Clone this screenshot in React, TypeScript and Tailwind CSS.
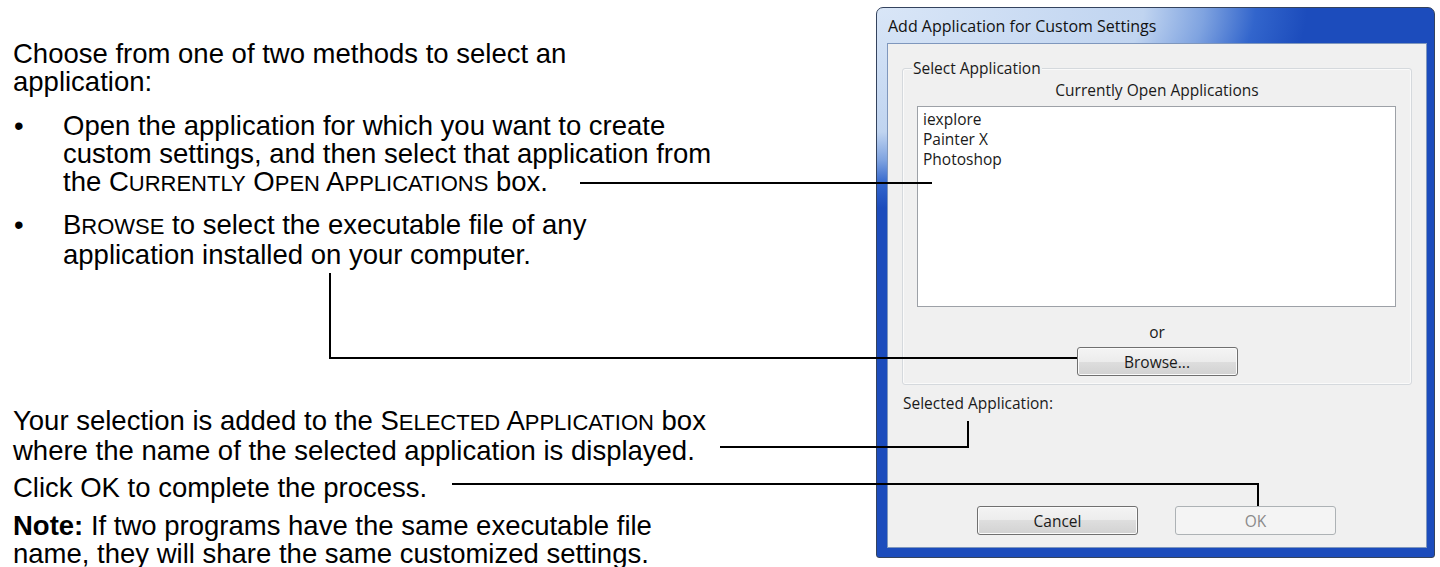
import { Fragment } from 'react'
import type { ReactNode } from 'react'

// Manual-style small caps: full-size initial, the rest at 80%
function Caps({ text }: { text: string }) {
  const words = text.split(' ')
  return (
    <>
      {words.map((w, i) => (
        <Fragment key={i}>
          {i > 0 && ' '}
          {w[0].toUpperCase()}
          <span className="text-[0.8em]">{w.slice(1).toUpperCase()}</span>
        </Fragment>
      ))}
    </>
  )
}

function WinButton({ children, disabled }: { children: ReactNode; disabled?: boolean }) {
  if (disabled) {
    return (
      <button
        disabled
        className="h-[29px] w-[161px] rounded-[3px] border border-[#adb2b5] bg-[#f4f4f4] text-[15.5px] text-[#8a8a8a]"
      >
        {children}
      </button>
    )
  }
  return (
    <button className="h-[29px] w-[161px] rounded-[3px] border border-[#707070] bg-[linear-gradient(to_bottom,#f4f4f4_0%,#ececec_50%,#dedede_50%,#d2d2d2_100%)] text-[15.5px] text-[#1a1a1a] shadow-[inset_0_0_0_1px_#fbfbfb]">
      {children}
    </button>
  )
}

function AddAppDialog() {
  return (
    <div className="ml-auto mr-[5px] mt-[7px] flex h-[551px] w-[559px] shrink-0 flex-col rounded-t-[7px] rounded-b-[3px] border border-[#34435e] bg-[radial-gradient(430px_200px_at_0_0,#d9e6f7_0%,#c0d4f0_62%,#7fa3e0_76%,#3265cc_88%,#1c4cbc_100%)] pb-[9px] pl-[10px] pr-[7px] font-['Open_Sans',sans-serif]">
      {/* title bar */}
      <div className="flex h-[35px] items-center pl-[1px] text-[16px] text-[#111]">
        Add Application for Custom Settings
      </div>

      {/* client area */}
      <div className="flex flex-1 flex-col border border-[#7f97bd] bg-[#f0f0f0] text-[15.5px] leading-[20px] text-[#1a1a1a]">
        {/* Select Application group */}
        <div className="relative mx-[14px] mt-[24px] flex h-[317px] flex-col rounded-[3px] border border-[#d5d9dd] shadow-[inset_0_0_0_1px_#fafafa]">
          <span className="absolute left-[9px] top-[-11px] bg-[#f0f0f0] px-[1px]">Select Application</span>
          <div className="mt-[11px] text-center">Currently Open Applications</div>
          <ul className="ml-[14px] mr-[15px] mt-[6px] h-[201px] border border-[#9da1a7] bg-white pl-[5px] pt-[2px]">
            <li>iexplore</li>
            <li>Painter X</li>
            <li>Photoshop</li>
          </ul>
          <div className="mt-[15px] text-center">or</div>
          <div className="mt-[5px] flex justify-center">
            <WinButton>Browse...</WinButton>
          </div>
        </div>

        <div className="ml-[15px] mt-[8px]">Selected Application:</div>

        <div className="mt-auto flex gap-[37px] pb-[12px] pl-[89px]">
          <WinButton>Cancel</WinButton>
          <WinButton disabled>OK</WinButton>
        </div>
      </div>
    </div>
  )
}

export default function App() {
  return (
    <div className="relative flex h-[567px] w-[1440px] overflow-hidden bg-white">
      <div className="w-[740px] shrink-0 pl-[13px] pt-[39.5px] font-['Liberation_Sans',Arial,sans-serif] text-[27.5px] leading-[28px] text-black">
        <p>
          Choose from one of two methods to select an
          <br />
          application:
        </p>
        <ul className="mt-[16px]">
          <li className="flex">
            <span className="w-[50px] shrink-0 pl-[1px]">•</span>
            <span>
              Open the application for which you want to create
              <br />
              custom settings, and then select that application from
              <br />
              the <Caps text="Currently Open Applications" /> box.
            </span>
          </li>
          <li className="mt-[13px] flex">
            <span className="w-[50px] shrink-0 pl-[1px]">•</span>
            <span>
              <Caps text="Browse" /> to select the executable file of any
              <br />
              application installed on your computer.
            </span>
          </li>
        </ul>
        <p className="mt-[138px]">
          Your selection is added to the <Caps text="Selected Application" /> box
          <br />
          where the name of the selected application is displayed.
        </p>
        <p className="mt-[9px]">Click OK to complete the process.</p>
        <p className="mt-[10px]">
          <b>Note:</b> If two programs have the same executable file
          <br />
          name, they will share the same customized settings.
        </p>
      </div>

      <AddAppDialog />

      {/* callout leader lines */}
      <div className="absolute left-[580px] top-[182px] z-10 h-[2px] w-[352px] bg-black" />
      <div className="absolute left-[329px] top-[273px] z-10 h-[86px] w-[2px] bg-black" />
      <div className="absolute left-[329px] top-[357px] z-10 h-[2px] w-[748px] bg-black" />
      <div className="absolute left-[720px] top-[446px] z-10 h-[2px] w-[249px] bg-black" />
      <div className="absolute left-[967px] top-[421px] z-10 h-[27px] w-[2px] bg-black" />
      <div className="absolute left-[452px] top-[483px] z-10 h-[2px] w-[807px] bg-black" />
      <div className="absolute left-[1257px] top-[483px] z-10 h-[23px] w-[2px] bg-black" />
    </div>
  )
}
